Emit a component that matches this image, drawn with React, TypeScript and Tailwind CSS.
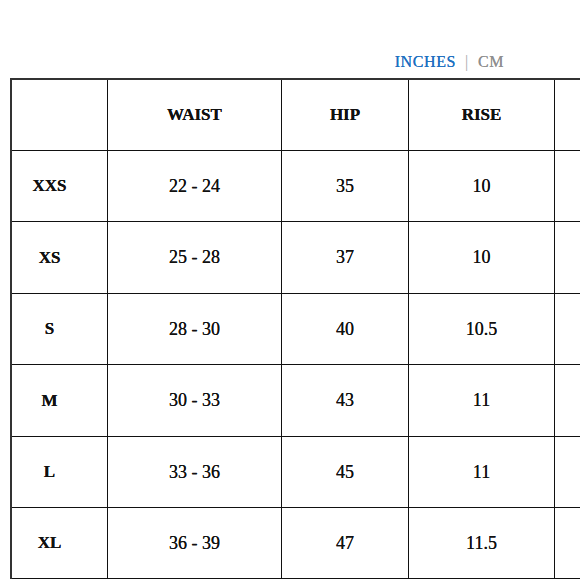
const columns = ['', 'WAIST', 'HIP', 'RISE', '']

const rows = [
    { size: 'XXS', waist: '22 - 24', hip: '35', rise: '10', h: 'h-[71px]' },
    { size: 'XS', waist: '25 - 28', hip: '37', rise: '10', h: 'h-[72px]' },
    { size: 'S', waist: '28 - 30', hip: '40', rise: '10.5', h: 'h-[71px]' },
    { size: 'M', waist: '30 - 33', hip: '43', rise: '11', h: 'h-[72px]' },
    { size: 'L', waist: '33 - 36', hip: '45', rise: '11', h: 'h-[71px]' },
    { size: 'XL', waist: '36 - 39', hip: '47', rise: '11.5', h: 'h-[71px]' }
]

const cell = 'flex items-center justify-center border-r border-b border-[#111] shrink-0'

const App = () => {
    return (
        <div className="w-[580px] h-[580px] overflow-hidden bg-white font-['Liberation_Serif',serif] text-[#111]">
            {/* unit toggle */}
            <div className="h-[78px] flex justify-end items-start pt-[50px] pr-[76px] text-[16px] tracking-[0.6px]">
                <span className="text-[#1f6fc0] [text-shadow:0_0_0.4px_#1f6fc0]">INCHES</span>
                <span className="text-[#aaa] mx-[9px]">|</span>
                <span className="text-[#8f8f8f] [text-shadow:0_0_0.4px_#8f8f8f]">CM</span>
            </div>

            <div className="ml-[10px] w-[700px] border-l-2 border-t-2 border-[#333]">
                <div className="flex h-[71px] font-bold text-[17px] [text-shadow:0_0_0.5px_#111]">
                    <div className={`${cell} w-[96px]`}>{columns[0]}</div>
                    <div className={`${cell} w-[174px]`}>{columns[1]}</div>
                    <div className={`${cell} w-[127px]`}>{columns[2]}</div>
                    <div className={`${cell} w-[146px]`}>{columns[3]}</div>
                    <div className={`${cell} w-[146px]`}>{columns[4]}</div>
                </div>
                {rows.map((r) => (
                    <div key={r.size} className={`flex text-[18px] ${r.h}`}>
                        <div className={`${cell} w-[96px] pr-[20px] font-bold text-[17px] [text-shadow:0_0_0.5px_#111]`}>{r.size}</div>
                        <div className={`${cell} w-[174px] [text-shadow:0_0_0.3px_#111]`}>{r.waist}</div>
                        <div className={`${cell} w-[127px] [text-shadow:0_0_0.3px_#111]`}>{r.hip}</div>
                        <div className={`${cell} w-[146px] [text-shadow:0_0_0.3px_#111]`}>{r.rise}</div>
                        <div className={`${cell} w-[146px]`}></div>
                    </div>
                ))}
            </div>
        </div>
    )
}

export default App
